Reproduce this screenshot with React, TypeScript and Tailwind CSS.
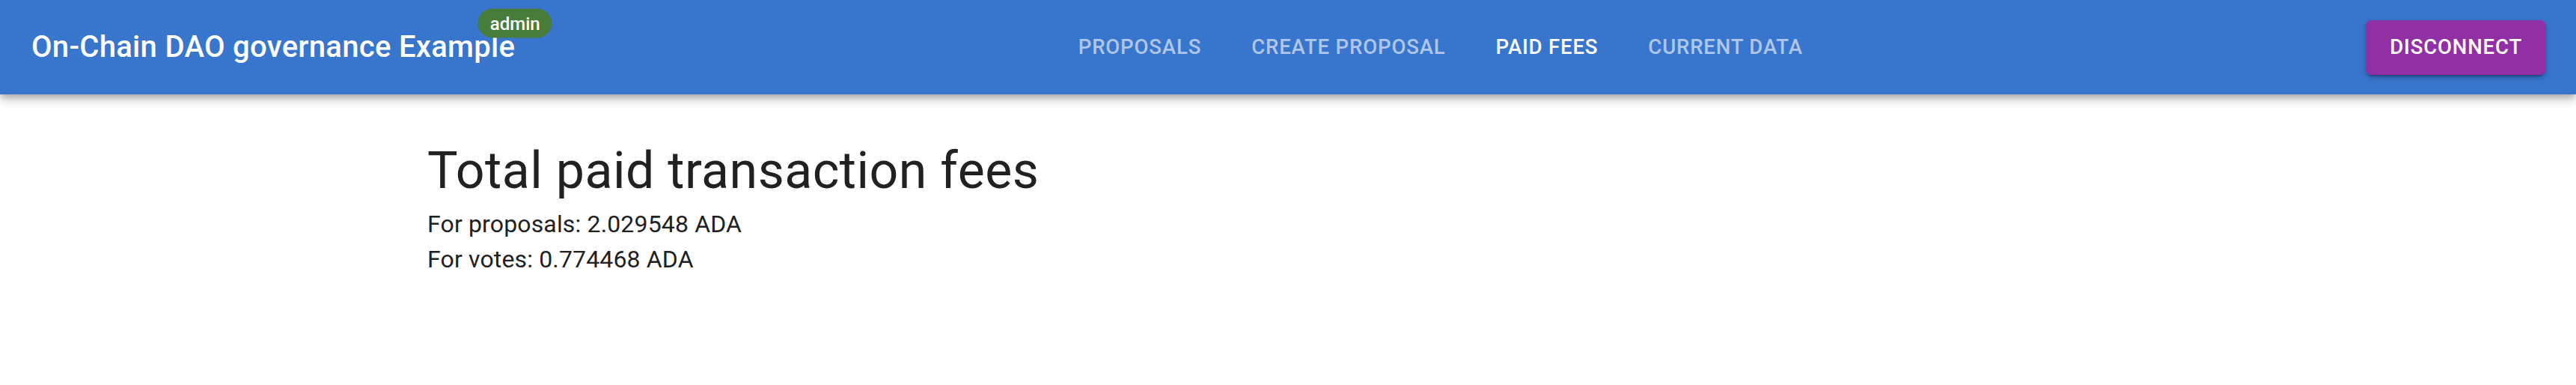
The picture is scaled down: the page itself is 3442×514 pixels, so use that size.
import React from 'react';

const navItems = [
  { id: 'proposals', label: 'Proposals' },
  { id: 'create', label: 'Create Proposal' },
  { id: 'fees', label: 'Paid Fees' },
  { id: 'current', label: 'Current Data' },
];

export default function App() {
  const current = 'fees';

  return (
    <div className="min-h-screen bg-white font-['Roboto','Liberation_Sans',sans-serif] text-[#212121]">
      {/* App bar */}
      <header className="relative z-10 bg-[#3875cc] text-white shadow-[0_4px_8px_-2px_rgba(0,0,0,0.2),0_8px_10px_0_rgba(0,0,0,0.14),0_2px_20px_0_rgba(0,0,0,0.12)]">
        <div className="flex h-[126px] items-center pl-[42px] pr-[40px]">
          <div className="relative shrink-0">
            <h1 className="text-[40px] font-medium leading-[1.6] tracking-[0.3px]">
              On-Chain DAO governance Example
            </h1>
            <span className="absolute right-0 top-0 flex h-[39px] min-w-[39px] translate-x-1/2 -translate-y-1/2 items-center justify-center rounded-full bg-[#487c3a] px-[16px] text-[24px] font-medium leading-none">
              admin
            </span>
          </div>

          <nav className="flex flex-1 items-center justify-center gap-[35px]">
            {navItems.map((item) => (
              <button
                key={item.id}
                className={`px-[16px] py-[12px] text-[27.6px] font-medium uppercase leading-[1.75] tracking-[0.8px] ${
                  current === item.id ? 'text-white' : 'text-white/60'
                }`}
              >
                {item.label}
              </button>
            ))}
          </nav>

          <button className="h-[73px] shrink-0 rounded-[8px] bg-[#9130a5] px-[32px] text-[27.6px] font-medium uppercase leading-none tracking-[0.8px] text-white shadow-[0_6px_2px_-4px_rgba(0,0,0,0.2),0_4px_4px_0_rgba(0,0,0,0.14),0_2px_10px_0_rgba(0,0,0,0.12)]">
            Disconnect
          </button>
        </div>
      </header>

      {/* Content */}
      <main className="mx-auto max-w-[2364px] px-[32px] pt-[61px]">
        <h2 className="mb-[5px] text-[68px] font-normal leading-[1.235] tracking-[0.5px]">
          Total paid transaction fees
        </h2>
        <p className="text-[32px] leading-[47px] tracking-[0.15px]">For proposals: 2.029548 ADA</p>
        <p className="text-[32px] leading-[47px] tracking-[0.15px]">For votes: 0.774468 ADA</p>
      </main>
    </div>
  );
}
